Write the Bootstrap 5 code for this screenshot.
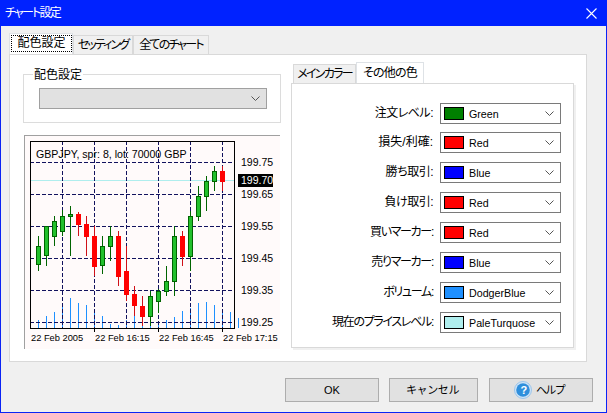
<!DOCTYPE html>
<html lang="ja">
<head>
  <meta charset="UTF-8">
  <title>チャート設定</title>
  <link rel="stylesheet" href="https://cdn.jsdelivr.net/npm/bootstrap@5.3.0/dist/css/bootstrap.min.css">
  <style>
    html, body { height: 100%; margin: 0; overflow: hidden; }
    body { background: #f0f0f0; color: #000; font: 12px/16px "Liberation Sans", "Noto Sans CJK JP", sans-serif; font-feature-settings: "palt"; white-space: nowrap; }
    .dlg { width: 607px; height: 413px; border: 1px solid #0a24f5; border-top: 0; }
    .dlg-title { height: 26px; margin: 0 -1px; padding: 0 10px 0 5px; background: #0022ff; color: #fff; letter-spacing: -1.8px; }
    .dlg-body { padding: 8px 19px 0 8px; }
    .tabs-main, .tabs-sub { border: 0; height: 20px; position: relative; z-index: 1; }
    .tabs-main .nav-link, .tabs-sub .nav-link {
      height: 19px; margin: 1px 0 0; padding: 0; font-size: 12px; line-height: 18px; color: #000; text-align: center;
      background: #f0f0f0; border: 1px solid #d9d9d9; border-bottom: 0; border-radius: 0;
    }
    .tabs-main .nav-link.active, .tabs-sub .nav-link.active { height: 21px; margin-top: -1px; background: #fff; line-height: 20px; }
    .tabs-main .nav-link.active span { display: block; height: 15px; margin: 2px 1px 0 2px; line-height: 14px; outline: 1px dotted #000; }
    .tabs-main .nav-item:nth-child(1) .nav-link { width: 64px; }
    .tabs-main .nav-item:nth-child(2) .nav-link { width: 60px; margin-left: 0; letter-spacing: -1.9px; }
    .tabs-main .nav-item:nth-child(3) .nav-link { width: 76px; margin-left: 0; letter-spacing: -1.8px; }
    .panel-main { width: 578px; height: 308px; padding: 19px 12px 0 13px; background: #fff; border: 1px solid #d9d9d9; }
    .col-left { width: 258px; }
    .col-right { width: 283px; margin-top: -11px; margin-left: 10px; }
    .grp { height: 49px; padding: 13px 13px 0 15px; border: 1px solid #dcdcdc; position: relative; }
    .grp-label { position: absolute; left: 9px; top: -8px; padding: 0 1px 0 1px; background: #fff; }
    .sel-off { height: 21px; padding-right: 6px; background: #e1e1e1; border: 1px solid #a0a0a0; }
    .chart-box { width: 256px; height: 214px; margin: 12px 0 0 1px; background: #fffafa; border-top: 1px solid #a0a0a0; border-left: 1px solid #a0a0a0; }
    .chart-box svg { display: block; margin: -1px 0 0 -1px; }
    .chart-box text { font-family: "Liberation Sans", sans-serif; }
    .tabs-sub { margin-left: 2px; }
    .tabs-sub .nav-link { width: 63px; letter-spacing: -1.7px; }
    .tabs-sub .nav-link.active { width: 68px; letter-spacing: -.8px; }
    .panel-sub { height: 265px; padding-top: 19px; padding-right: 12px; background: #fff; border: 1px solid #d9d9d9; box-shadow: 2px 2px 0 #f0f0f0; }
    .clr-row { height: 21px; margin-bottom: 9px; }
    .clr-row:first-child { margin-bottom: 8px; }
    .clr-label { margin-right: 7px; line-height: 21px; }
    .squeeze-a { letter-spacing: -.5px; }
    .squeeze-b { letter-spacing: -1.3px; }
    .clr-sel { width: 121px; height: 21px; padding: 0 6px 0 3px; border: 1px solid #7a7a7a; background: #fff; color: #000; font-size: 10.7px; }
    .clr-chip { width: 20px; height: 13px; margin-right: 5px; border: 1px solid #000; }
    .chip-green { background: #008000; }
    .chip-red { background: #f00; }
    .chip-blue { background: #00f; }
    .chip-dodger { background: #1e90ff; }
    .chip-pale { background: #afeeee; }
    .dlg-foot { padding: 16px 0 0 276px; margin-right: -6px; }
    .dlg-btn { height: 24px; padding: 0; font: 11px/22px "Liberation Sans", "Noto Sans CJK JP", sans-serif; color: #000; background: #e1e1e1; border: 1px solid #adadad; border-radius: 0; letter-spacing: -1.6px; }
    .btn-ok { width: 94px; letter-spacing: 0; }
    .btn-cancel { width: 89px; margin-left: 10px; padding-right: 2px; letter-spacing: -.4px; }
    .btn-help { width: 104px; margin-left: 11px; padding-right: 4px; }
  </style>
</head>
<body>
  <svg width="0" height="0" class="position-absolute">
    <symbol id="chev" viewBox="0 0 9 5"><path d="M0.5 0.5 L4.5 4.5 L8.5 0.5" fill="none" stroke="#555" stroke-width="1"/></symbol>
  </svg>

  <div class="dlg">
    <div class="dlg-title d-flex align-items-center justify-content-between">
      <span>チャート設定</span>
      <svg width="11" height="11" viewBox="0 0 11 11"><path d="M0.5 0.5 L10.5 10.5 M10.5 0.5 L0.5 10.5" stroke="#fff" stroke-width="1.1"/></svg>
    </div>

    <div class="dlg-body">
      <ul class="nav nav-tabs tabs-main flex-nowrap">
        <li class="nav-item"><a class="nav-link active" href="#"><span>配色設定</span></a></li>
        <li class="nav-item"><a class="nav-link" href="#">セッティング</a></li>
        <li class="nav-item"><a class="nav-link" href="#">全てのチャート</a></li>
      </ul>

      <div class="panel-main d-flex">
        <div class="col-left">
          <div class="grp">
            <span class="grp-label">配色設定</span>
            <div class="sel-off d-flex align-items-center justify-content-end">
              <svg width="9" height="5"><use href="#chev"/></svg>
            </div>
          </div>
          <div class="chart-box">
            <svg id="chart" width="256" height="214" viewBox="24 134 256 214"></svg>
          </div>
        </div>

        <div class="col-right">
          <ul class="nav nav-tabs tabs-sub flex-nowrap">
            <li class="nav-item"><a class="nav-link" href="#">メインカラー</a></li>
            <li class="nav-item"><a class="nav-link active" href="#">その他の色</a></li>
          </ul>
          <div class="panel-sub">
            <div class="clr-row d-flex justify-content-end"><span class="clr-label squeeze-a">注文レベル:</span><div class="clr-sel d-flex align-items-center"><span class="clr-chip chip-green"></span><span class="flex-grow-1">Green</span><svg width="9" height="5"><use href="#chev"/></svg></div></div>
            <div class="clr-row d-flex justify-content-end"><span class="clr-label">損失/利確:</span><div class="clr-sel d-flex align-items-center"><span class="clr-chip chip-red"></span><span class="flex-grow-1">Red</span><svg width="9" height="5"><use href="#chev"/></svg></div></div>
            <div class="clr-row d-flex justify-content-end"><span class="clr-label squeeze-a">勝ち取引:</span><div class="clr-sel d-flex align-items-center"><span class="clr-chip chip-blue"></span><span class="flex-grow-1">Blue</span><svg width="9" height="5"><use href="#chev"/></svg></div></div>
            <div class="clr-row d-flex justify-content-end"><span class="clr-label squeeze-a">負け取引:</span><div class="clr-sel d-flex align-items-center"><span class="clr-chip chip-red"></span><span class="flex-grow-1">Red</span><svg width="9" height="5"><use href="#chev"/></svg></div></div>
            <div class="clr-row d-flex justify-content-end"><span class="clr-label squeeze-b">買いマーカー:</span><div class="clr-sel d-flex align-items-center"><span class="clr-chip chip-red"></span><span class="flex-grow-1">Red</span><svg width="9" height="5"><use href="#chev"/></svg></div></div>
            <div class="clr-row d-flex justify-content-end"><span class="clr-label squeeze-b">売りマーカー:</span><div class="clr-sel d-flex align-items-center"><span class="clr-chip chip-blue"></span><span class="flex-grow-1">Blue</span><svg width="9" height="5"><use href="#chev"/></svg></div></div>
            <div class="clr-row d-flex justify-content-end"><span class="clr-label squeeze-b">ボリューム:</span><div class="clr-sel d-flex align-items-center"><span class="clr-chip chip-dodger"></span><span class="flex-grow-1">DodgerBlue</span><svg width="9" height="5"><use href="#chev"/></svg></div></div>
            <div class="clr-row d-flex justify-content-end"><span class="clr-label squeeze-b">現在のプライスレベル:</span><div class="clr-sel d-flex align-items-center"><span class="clr-chip chip-pale"></span><span class="flex-grow-1">PaleTurquose</span><svg width="9" height="5"><use href="#chev"/></svg></div></div>
          </div>
        </div>
      </div>

      <div class="dlg-foot d-flex">
        <button class="btn dlg-btn btn-ok" type="button">OK</button>
        <button class="btn dlg-btn btn-cancel" type="button">キャンセル</button>
        <button class="btn dlg-btn btn-help d-flex align-items-center justify-content-center gap-1" type="button">
          <svg width="18" height="18" viewBox="0 0 18 18">
            <circle cx="9" cy="9" r="8.5" fill="#cfe4f7" stroke="#9cc5ea"/>
            <circle cx="9" cy="9" r="6.8" fill="#2f8fdc"/>
            <text x="9" y="13" text-anchor="middle" font-family="Liberation Sans, sans-serif" font-size="11" font-weight="700" fill="#fff">?</text>
          </svg>
          <span>ヘルプ</span>
        </button>
      </div>
    </div>
  </div>

  <script>
    // x, wick top, body top, body bottom, wick bottom, up?
    const candles = [
      [38,235,245,263,270,1],[46,225,225,254,265,1],[54,215,220,235,245,1],[62,209,215,230,235,1],
      [70,205,213,215,255,1],[78,211,213,223,235,0],[86,215,223,235,255,0],[94,225,235,265,275,0],
      [102,235,245,264,273,1],[110,225,235,245,260,1],[118,230,235,275,285,0],[126,245,270,293,300,0],
      [134,285,293,304,315,0],[142,295,305,315,325,0],[150,290,295,315,325,1],[158,288,290,300,312,1],
      [166,265,280,290,295,1],[174,225,235,280,295,1],[182,230,235,255,265,0],[190,210,215,255,270,1],
      [198,185,195,215,220,1],[206,175,180,195,210,1],[214,165,170,180,190,1],[222,165,170,180,190,0]
    ];
    const volumes = [319,315,311,304,297,302,304,308,315,323,324,319,315,325,318,323,319,316,310,307,302,301,304,309,311,317];
    const prices = [[161,'199.75'],[193,'199.65'],[225,'199.55'],[257,'199.45'],[289,'199.35'],[321,'199.25']];
    const dates = [[31,'22 Feb 2005'],[95,'22 Feb 16:15'],[159,'22 Feb 16:45'],[223,'22 Feb 17:15']];

    let s = '';
    volumes.forEach((top, i) => {
      const x = 38 + i * 8;
      s += `<path d="M${x}.5 ${top} V327" stroke="#1e90ff"/>`;
    });
    s += `<path d="M30 179.5 H234" stroke="#afeeee"/>`;
    prices.forEach(p => { s += `<path d="M30 ${p[0]}.5 H234" stroke="#12125e" stroke-dasharray="4 2"/>`; });
    [62,94,126,158,190,222].forEach(x => { s += `<path d="M${x}.5 140 V327" stroke="#12125e" stroke-dasharray="4 2"/>`; });
    candles.forEach(c => {
      const [x, wt, bt, bb, wb, up] = c;
      s += `<path d="M${x}.5 ${wt} V${wb}" stroke="${up ? '#006400' : '#d01018'}"/>`;
      if (up) s += `<rect x="${x - 2}.5" y="${bt}.5" width="4" height="${bb - bt}" fill="#22c02c" stroke="#006400"/>`;
      else s += `<rect x="${x - 2}" y="${bt}" width="5" height="${bb - bt + 1}" fill="#f00"/>`;
    });
    s += `<rect x="30.5" y="140.5" width="204" height="187" fill="none" stroke="#000"/>`;
    s += `<path d="M30 327.5 H235" stroke="#000"/>`;
    [94,158,222].forEach(x => { s += `<path d="M${x}.5 327 V331" stroke="#000"/>`; });
    s += `<text x="36" y="157" font-size="10.6" fill="#000">GBPJPY, spr: 8, lot: 70000 GBP</text>`;
    prices.forEach(p => { s += `<text x="241" y="${p[0] + 4}" font-size="10.5" fill="#000">${p[1]}</text>`; });
    s += `<rect x="238" y="173" width="35" height="13" fill="#000"/>`;
    s += `<text x="241" y="183" font-size="10.5" fill="#fff">199.70</text>`;
    dates.forEach(d => { s += `<text x="${d[0]}" y="340" font-size="9.3" fill="#000">${d[1]}</text>`; });
    document.getElementById('chart').innerHTML = s;
  </script>
  <script src="https://cdn.jsdelivr.net/npm/bootstrap@5.3.0/dist/js/bootstrap.bundle.min.js"></script>
</body>
</html>
